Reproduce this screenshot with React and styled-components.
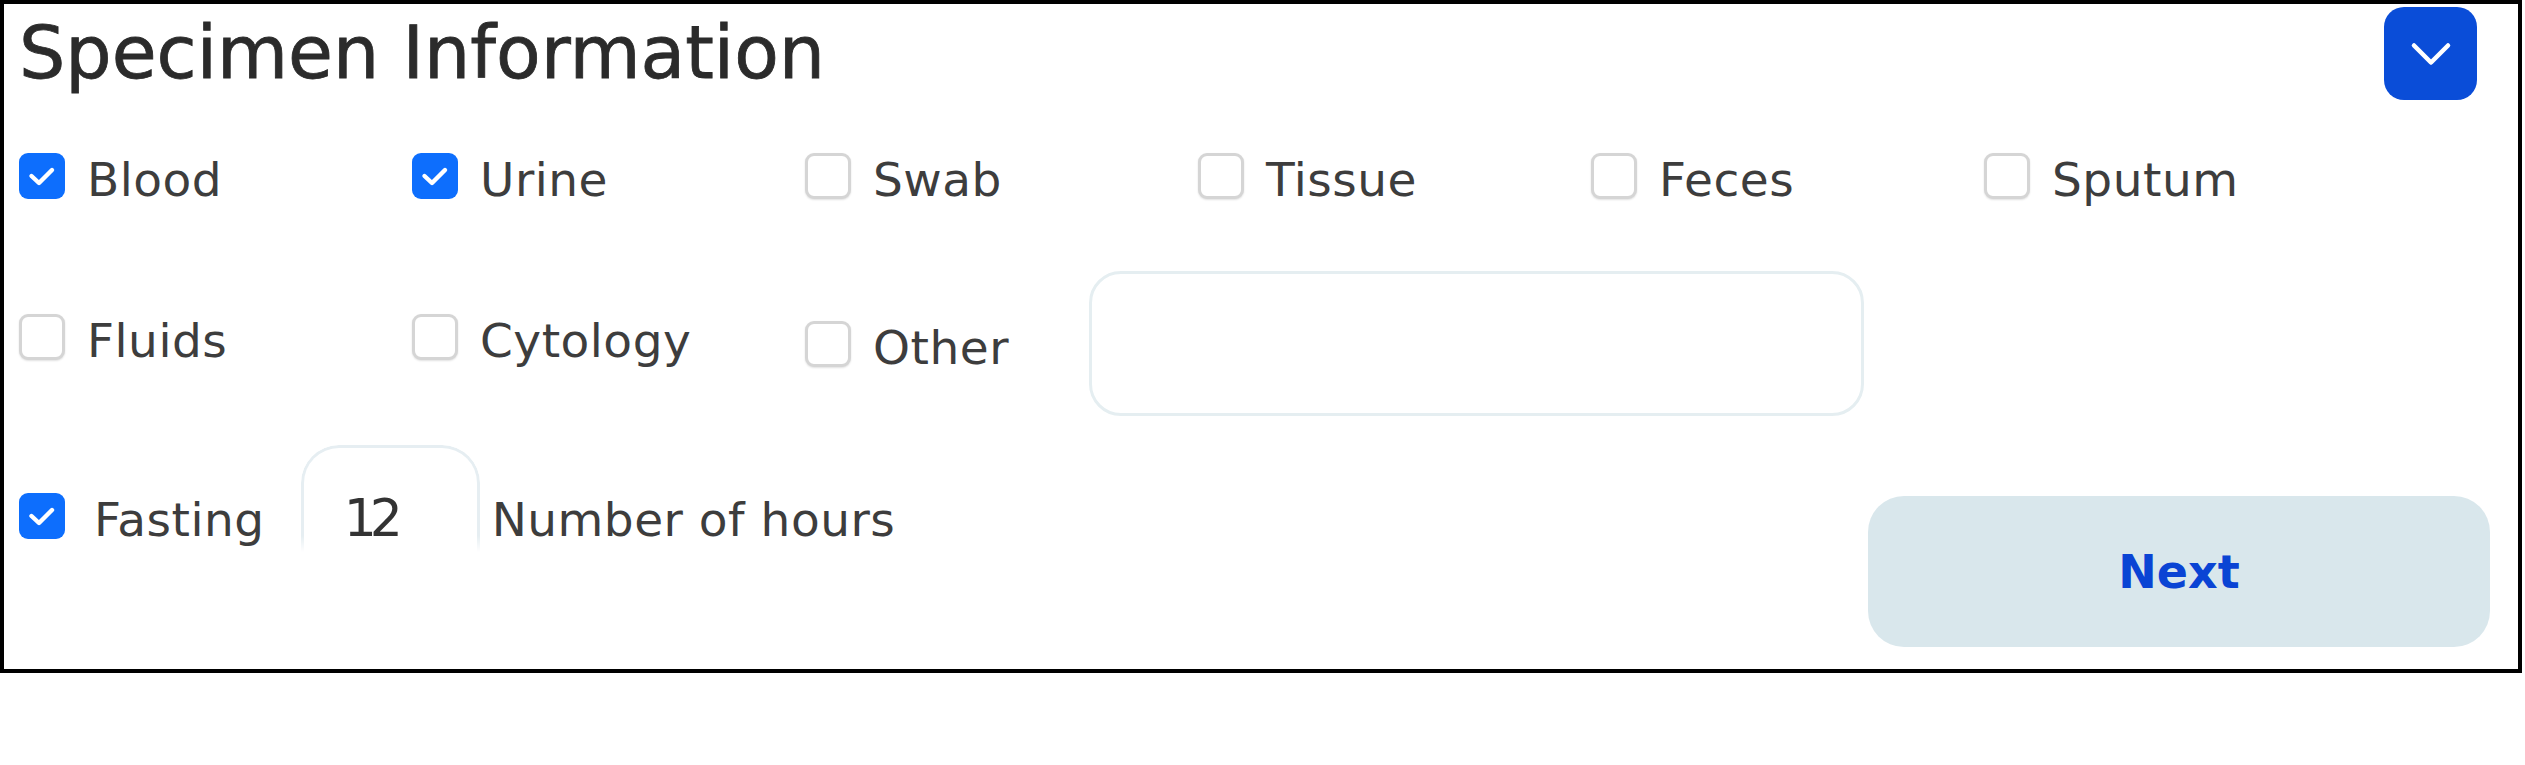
import React from 'react'
import styled, { createGlobalStyle } from 'styled-components'
import { ChevronDown } from 'lucide-react'

const GlobalStyle = createGlobalStyle`
  body {
    margin: 0;
    background: #ffffff;
    font-family: "DejaVu Sans", "Liberation Sans", sans-serif;
  }
`

const firstRow = ['Blood', 'Urine', 'Swab', 'Tissue', 'Feces', 'Sputum']
const secondRow = ['Fluids', 'Cytology']

export default function App() {
  const [checked, setChecked] = React.useState({ Blood: true, Urine: true, Fasting: true })
  const [hours, setHours] = React.useState('12')
  const [other, setOther] = React.useState('')
  const toggle = name => setChecked(c => ({ ...c, [name]: !c[name] }))

  return (
    <>
      <GlobalStyle />
      <Card>
        <Header>
          <Title>Specimen Information</Title>
          <CollapseButton aria-label="collapse">
            <ChevronDown size={68} strokeWidth={1.6} color="#ffffff" />
          </CollapseButton>
        </Header>

        <OptionRow>
          {firstRow.map(name => (
            <Option key={name} onClick={() => toggle(name)}>
              <Box $checked={!!checked[name]} />
              <LabelText>{name}</LabelText>
            </Option>
          ))}
        </OptionRow>

        <OptionRow $tall>
          {secondRow.map(name => (
            <Option key={name} $lift onClick={() => toggle(name)}>
              <Box $checked={!!checked[name]} />
              <LabelText>{name}</LabelText>
            </Option>
          ))}
          <OtherCell>
            <Option onClick={() => toggle('Other')}>
              <Box $checked={!!checked.Other} />
              <LabelText>Other</LabelText>
            </Option>
            <OtherInput value={other} onChange={e => setOther(e.target.value)} />
          </OtherCell>
        </OptionRow>

        <Footer>
          <FastingRow>
            <Option $wide onClick={() => toggle('Fasting')}>
              <Box $checked={!!checked.Fasting} />
              <LabelText>Fasting</LabelText>
            </Option>
            <HoursBox>
              <HoursInput value={hours} onChange={e => setHours(e.target.value)} />
            </HoursBox>
            <LabelText>Number of hours</LabelText>
          </FastingRow>
          <NextButton>Next</NextButton>
        </Footer>
      </Card>
    </>
  )
}

function Box({ $checked }) {
  return (
    <CheckBox $checked={$checked}>
      {$checked && (
        <svg width="46" height="46" viewBox="0 0 46 46">
          <polyline
            points="12.5,23 20,30 33,17"
            fill="none"
            stroke="#ffffff"
            strokeWidth="4.4"
            strokeLinecap="round"
            strokeLinejoin="round"
          />
        </svg>
      )}
    </CheckBox>
  )
}

const Card = styled.div`
  box-sizing: border-box;
  width: 2522px;
  height: 673px;
  border: 4px solid #000000;
  padding: 3px 28px 0 15px;
  background: #ffffff;
`

const Header = styled.div`
  display: flex;
  justify-content: space-between;
  align-items: flex-start;
`

const Title = styled.h1`
  margin: 9px 0 0 0;
  font-size: 73px;
  line-height: 1;
  font-weight: 400;
  color: #2b2b2b;
  -webkit-text-stroke: 0.8px #2b2b2b;
`

const CollapseButton = styled.button`
  width: 93px;
  height: 93px;
  margin-right: 13px;
  border: none;
  border-radius: 20px;
  background: #0a4dd8;
  display: flex;
  align-items: center;
  justify-content: center;
  padding: 0;
  cursor: pointer;
`

const OptionRow = styled.div`
  display: grid;
  grid-template-columns: repeat(6, 393px);
  align-items: center;
  margin-top: ${p => (p.$tall ? '69px' : '48px')};
  height: ${p => (p.$tall ? '145px' : '54px')};
`

const Option = styled.label`
  display: flex;
  align-items: center;
  gap: ${p => (p.$wide ? '29px' : '22px')};
  margin-bottom: ${p => (p.$lift ? '14px' : '0')};
  cursor: pointer;
`

const CheckBox = styled.span`
  box-sizing: border-box;
  flex: none;
  width: 46px;
  height: 46px;
  border-radius: 9px;
  border: ${p => (p.$checked ? 'none' : '3px solid #d5d5d5')};
  background: ${p => (p.$checked ? '#0d6efd' : '#ffffff')};
  box-shadow: ${p => (p.$checked ? 'none' : '0 1px 2px rgba(0, 0, 0, 0.12)')};
  display: block;
  svg {
    display: block;
  }
`

const LabelText = styled.span`
  margin-top: 8px;
  font-size: 47px;
  letter-spacing: 0.5px;
  line-height: 1;
  color: #3d3d3d;
  white-space: nowrap;
`

const OtherCell = styled.div`
  grid-column: 3 / span 4;
  display: flex;
  align-items: center;
  gap: 80px;
`

const OtherInput = styled.input`
  box-sizing: border-box;
  width: 775px;
  height: 145px;
  border: 3px solid #e5eef1;
  border-radius: 32px;
  outline: none;
  padding: 0 30px;
  font: inherit;
  font-size: 46px;
  color: #3d3d3d;
`

const Footer = styled.div`
  display: flex;
  justify-content: space-between;
  align-items: flex-start;
  margin-top: 63px;
`

const FastingRow = styled.div`
  display: flex;
  align-items: center;
  gap: 12px;
`

const HoursBox = styled.div`
  box-sizing: border-box;
  width: 179px;
  height: 107px;
  margin: -34px 0 0 24px;
  border: 3px solid #e6eef2;
  border-bottom: none;
  border-radius: 38px 38px 0 0;
  display: flex;
  align-items: flex-end;
  padding: 0 0 4px 40px;
  -webkit-mask-image: linear-gradient(to bottom, #000 85%, transparent 100%);
  mask-image: linear-gradient(to bottom, #000 85%, transparent 100%);
`

const HoursInput = styled.input`
  width: 100%;
  border: none;
  outline: none;
  padding: 0;
  background: transparent;
  font: inherit;
  font-size: 52px;
  line-height: 1;
  letter-spacing: -7px;
  color: #333333;
`

const NextButton = styled.button`
  width: 622px;
  height: 151px;
  margin-top: 17px;
  border: none;
  border-radius: 36px;
  background: #d9e7ec;
  color: #0a44d4;
  font-family: inherit;
  font-size: 46px;
  font-weight: 700;
  cursor: pointer;
`
